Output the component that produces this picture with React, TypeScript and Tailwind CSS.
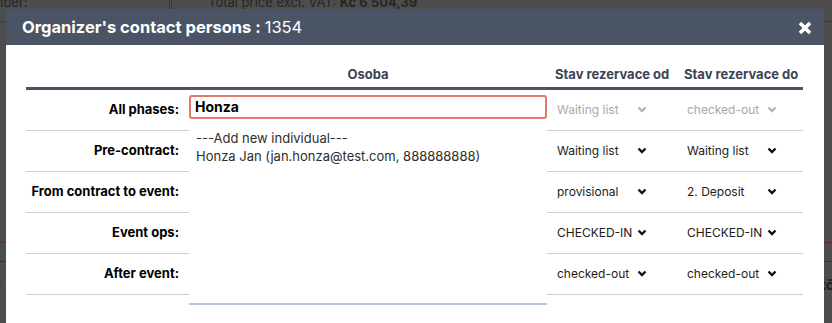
import { useState } from "react";

const phases = [
  { label: "All phases:", from: "Waiting list", to: "checked-out", disabled: true },
  { label: "Pre-contract:", from: "Waiting list", to: "Waiting list" },
  { label: "From contract to event:", from: "provisional", to: "2. Deposit" },
  { label: "Event ops:", from: "CHECKED-IN", to: "CHECKED-IN" },
  { label: "After event:", from: "checked-out", to: "checked-out" },
];

const options = ["---Add new individual---", "Honza Jan (jan.honza@test.com, 888888888)"];

function Chevron({ muted }: { muted?: boolean }) {
  return (
    <svg width="10" height="7" viewBox="0 0 10 7" className="shrink-0" aria-hidden="true">
      <polyline
        points="1.5,1.5 5,5 8.5,1.5"
        fill="none"
        stroke={muted ? "#b5b5b5" : "#111111"}
        strokeWidth="2.4"
      />
    </svg>
  );
}

function StatusSelect({ value, disabled }: { value: string; disabled?: boolean }) {
  return (
    <div className="flex w-[90px] items-center justify-between">
      <span className={disabled ? "text-[12px] text-[#a8a8a8]" : "text-[12px] text-[#1c1c1c]"}>{value}</span>
      <Chevron muted={disabled} />
    </div>
  );
}

export default function App() {
  const [query, setQuery] = useState("Honza");

  return (
    <div
      className="relative h-[323px] w-[832px] overflow-hidden bg-[#4d4d4d]"
      style={{ fontFamily: "Inter, 'Open Sans', sans-serif" }}
    >
      {/* page behind the dialog */}
      <div className="grid h-[22px] grid-cols-[172px_223px_1fr] border-b border-[#3a3a3a] text-[13px] leading-[16px] text-[#262626]">
        <div className="-mt-[6px] -ml-[8px] border-r-[3px] border-double border-[#3a3a3a]">mber:</div>
        <div className="-mt-[6px] whitespace-nowrap border-r border-[#3a3a3a] pl-[36px]">
          Total price excl. VAT: <b>Kč 6 504,39</b>
        </div>
        <div />
      </div>
      <div className="mt-[220px] border-t border-[#5a2c2c]" />
      <div className="mt-[18px] border-t border-[#2f3440]" />
      <div className="flex justify-between pt-[12px] text-[14px] font-bold text-[#1e1e1e]">
        <span className="-ml-[3px]">i</span>
        <span className="-mr-[2px]">kč</span>
      </div>

      {/* dialog */}
      <div className="absolute left-[6px] top-[9px] h-[330px] w-[818px] bg-white">
        <div className="flex h-[36px] items-center justify-between bg-[#4a5464] pl-[16px] pr-[12px] text-white">
          <h1 className="text-[16.5px] font-bold">
            Organizer's contact persons : <span className="font-normal">1354</span>
          </h1>
          <svg width="14" height="14" viewBox="0 0 14 14" className="mt-[1px]" aria-hidden="true">
            <path d="M2 2 L12 12 M12 2 L2 12" stroke="#ffffff" strokeWidth="3.6" />
          </svg>
        </div>

        <div className="pl-[20px] pr-[21px]">
          <div className="grid grid-cols-[163px_358px_130px_126px] border-b-[3px] border-[#4a5464] pb-[2px] pt-[20px] text-[13px] font-bold text-[#3b4454]">
            <div />
            <div className="text-center">Osoba</div>
            <div className="pl-[8px]">Stav rezervace od</div>
            <div className="pl-[7px]">Stav rezervace do</div>
          </div>

          {phases.map((phase, index) => (
            <div
              key={phase.label}
              className="grid h-[41px] grid-cols-[163px_358px_130px_126px] border-b border-[#cfcfcf]"
            >
              <div className="flex items-center justify-end pr-[10px] text-[13px] font-bold text-black">
                {phase.label}
              </div>
              <div className="relative">
                {index === 0 && (
                  <>
                    <input
                      value={query}
                      onChange={(event) => setQuery(event.target.value)}
                      className="mt-[5px] h-[24px] w-full rounded-[3px] border-2 border-[#e07b6e] px-[4px] text-[14px] font-bold text-black outline-none"
                    />
                    <ul className="absolute left-0 top-[29px] z-10 h-[186px] w-full border-b-2 border-[#b7c5e3] bg-white pl-[7px] pt-[10px] text-[13px] leading-[18px] text-[#2e2e2e]">
                      {options.map((option) => (
                        <li key={option}>{option}</li>
                      ))}
                    </ul>
                  </>
                )}
              </div>
              <div className="flex items-center pl-[10px]">
                <StatusSelect value={phase.from} disabled={phase.disabled} />
              </div>
              <div className="flex items-center pl-[10px]">
                <StatusSelect value={phase.to} disabled={phase.disabled} />
              </div>
            </div>
          ))}
        </div>
      </div>
    </div>
  );
}
